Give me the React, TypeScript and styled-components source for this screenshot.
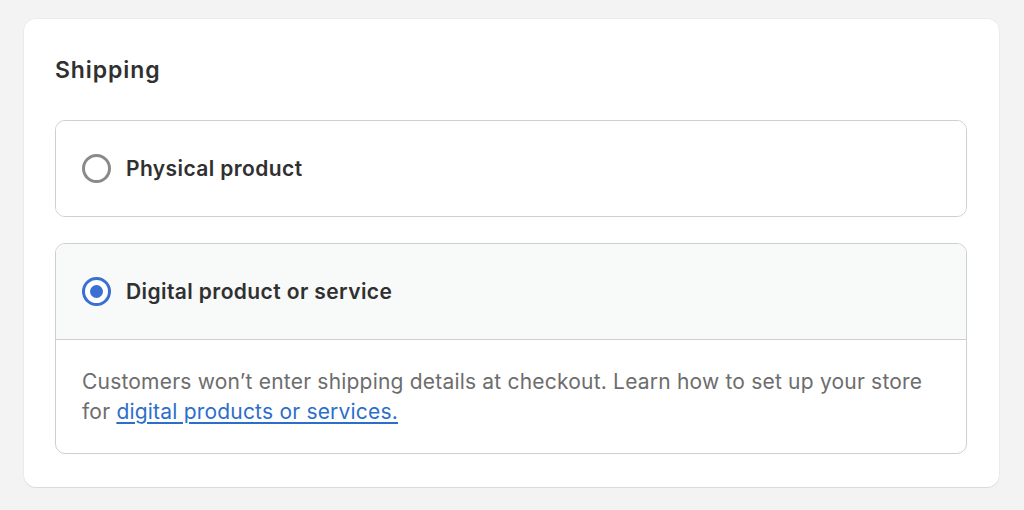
import React, { useState } from "react";
import styled, { createGlobalStyle, css } from "styled-components";

const GlobalStyle = createGlobalStyle`
    html, body {
        margin: 0;
        padding: 0;
        background: #f3f3f3;
        font-family: Inter, "Noto Sans", "Liberation Sans", sans-serif;
        -webkit-font-smoothing: antialiased;
    }
`;

const Page = styled.div`
    padding: 19px 25px 23px 24px;
`;

const Card = styled.section`
    background: #ffffff;
    border-radius: 12px;
    box-shadow: 0 1px 0 rgba(0, 0, 0, 0.07), 0 0 0 1px rgba(0, 0, 0, 0.03);
    padding: 37px 32px 33px 31px;
    display: flex;
    flex-direction: column;
`;

const Title = styled.h2`
    margin: 0 0 36px;
    font-size: 23px;
    line-height: 28px;
    font-weight: 600;
    letter-spacing: 0.9px;
    color: #303030;
`;

const Options = styled.div`
    display: flex;
    flex-direction: column;
    gap: 26px;
`;

const Option = styled.div`
    border: 1px solid #cfcfcf;
    border-radius: 10px;
    overflow: hidden;
`;

const OptionHeader = styled.label<{ $selected: boolean }>`
    display: flex;
    align-items: center;
    gap: 15px;
    height: 95px;
    padding: 0 26px;
    cursor: pointer;
    background: ${(p) => (p.$selected ? "#f8f9f9" : "#ffffff")};
`;

const Radio = styled.span<{ $checked: boolean }>`
    box-sizing: border-box;
    width: 29px;
    height: 29px;
    border-radius: 50%;
    flex-shrink: 0;
    display: flex;
    align-items: center;
    justify-content: center;
    background: #ffffff;
    ${(p) =>
        p.$checked
            ? css`
                  border: 3px solid #3b6fd1;
                  &::after {
                      content: "";
                      width: 13px;
                      height: 13px;
                      border-radius: 50%;
                      background: #3b6fd1;
                  }
              `
            : css`
                  border: 3px solid #8a8a8a;
              `}
`;

const OptionLabel = styled.span`
    font-size: 21px;
    font-weight: 600;
    letter-spacing: 0.4px;
    color: #303030;
`;

const OptionBody = styled.div`
    border-top: 1px solid #cfcfcf;
    padding: 27px 26px 26px;
    font-size: 21px;
    line-height: 30px;
    letter-spacing: 0.2px;
    color: #6d6d6d;
`;

const Link = styled.a`
    color: #2c6ecb;
    text-decoration: underline;
    text-underline-offset: 3px;
`;

const options = [
    { id: "physical", label: "Physical product" },
    { id: "digital", label: "Digital product or service" },
];

export default function App() {
    const [selected, setSelected] = useState("digital");

    return (
        <>
            <GlobalStyle />
            <Page>
                <Card>
                    <Title>Shipping</Title>
                    <Options>
                        {options.map((o) => (
                            <Option key={o.id}>
                                <OptionHeader $selected={selected === o.id} onClick={() => setSelected(o.id)}>
                                    <Radio $checked={selected === o.id} />
                                    <OptionLabel>{o.label}</OptionLabel>
                                </OptionHeader>
                                {o.id === "digital" && selected === "digital" && (
                                    <OptionBody>
                                        Customers won’t enter shipping details at checkout. Learn how to set up your store for{" "}
                                        <Link href="#">digital products or services.</Link>
                                    </OptionBody>
                                )}
                            </Option>
                        ))}
                    </Options>
                </Card>
            </Page>
        </>
    );
}
